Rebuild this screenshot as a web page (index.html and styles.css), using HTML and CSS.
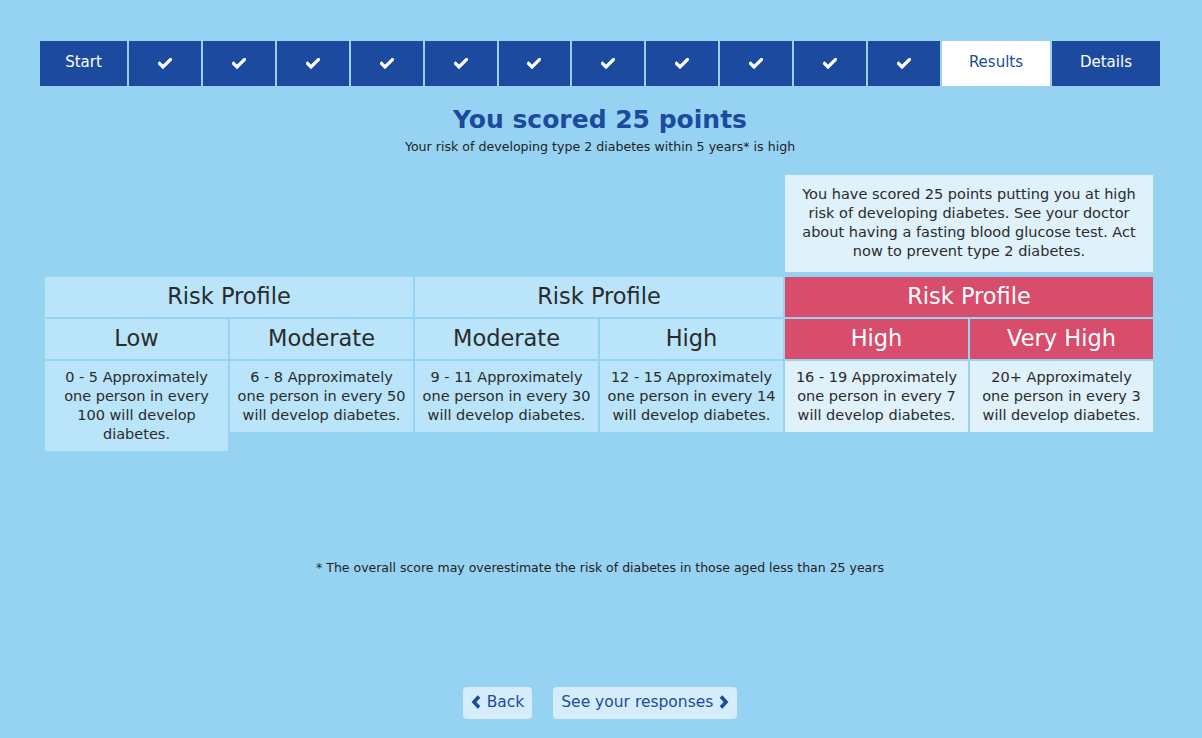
FILE: index.html
```html
<!DOCTYPE html>
<html lang="en">
<head>
<meta charset="utf-8">
<title>Results</title>
<link rel="stylesheet" href="styles.css">
</head>
<body>
<div class="page">
  <nav class="steps">
    <div class="step step-start">Start</div>
    <div class="step step-check"><svg class="tick" viewBox="0 0 14 11" width="14" height="11"><path d="M1.5 5.5 L5 9 L12.5 1.5" /></svg></div>
    <div class="step step-check"><svg class="tick" viewBox="0 0 14 11" width="14" height="11"><path d="M1.5 5.5 L5 9 L12.5 1.5" /></svg></div>
    <div class="step step-check"><svg class="tick" viewBox="0 0 14 11" width="14" height="11"><path d="M1.5 5.5 L5 9 L12.5 1.5" /></svg></div>
    <div class="step step-check"><svg class="tick" viewBox="0 0 14 11" width="14" height="11"><path d="M1.5 5.5 L5 9 L12.5 1.5" /></svg></div>
    <div class="step step-check"><svg class="tick" viewBox="0 0 14 11" width="14" height="11"><path d="M1.5 5.5 L5 9 L12.5 1.5" /></svg></div>
    <div class="step step-check"><svg class="tick" viewBox="0 0 14 11" width="14" height="11"><path d="M1.5 5.5 L5 9 L12.5 1.5" /></svg></div>
    <div class="step step-check"><svg class="tick" viewBox="0 0 14 11" width="14" height="11"><path d="M1.5 5.5 L5 9 L12.5 1.5" /></svg></div>
    <div class="step step-check"><svg class="tick" viewBox="0 0 14 11" width="14" height="11"><path d="M1.5 5.5 L5 9 L12.5 1.5" /></svg></div>
    <div class="step step-check"><svg class="tick" viewBox="0 0 14 11" width="14" height="11"><path d="M1.5 5.5 L5 9 L12.5 1.5" /></svg></div>
    <div class="step step-check"><svg class="tick" viewBox="0 0 14 11" width="14" height="11"><path d="M1.5 5.5 L5 9 L12.5 1.5" /></svg></div>
    <div class="step step-check"><svg class="tick" viewBox="0 0 14 11" width="14" height="11"><path d="M1.5 5.5 L5 9 L12.5 1.5" /></svg></div>
    <div class="step step-results">Results</div>
    <div class="step step-details">Details</div>
  </nav>

  <h1 class="score">You scored 25 points</h1>
  <p class="subtitle">Your risk of developing type 2 diabetes within 5 years* is high</p>

  <div class="info">You have scored 25 points putting you at high risk of developing diabetes. See your doctor about having a fasting blood glucose test. Act now to prevent type 2 diabetes.</div>

  <div class="profiles">
    <div class="group">
      <div class="group-head">Risk Profile</div>
      <div class="row">
        <div class="level">Low</div>
        <div class="level">Moderate</div>
      </div>
      <div class="row row-top">
        <div class="desc">0 - 5 Approximately one person in every 100 will develop diabetes.</div>
        <div class="desc">6 - 8 Approximately one person in every 50 will develop diabetes.</div>
      </div>
    </div>
    <div class="group">
      <div class="group-head">Risk Profile</div>
      <div class="row">
        <div class="level">Moderate</div>
        <div class="level">High</div>
      </div>
      <div class="row row-top">
        <div class="desc">9 - 11 Approximately one person in every 30 will develop diabetes.</div>
        <div class="desc">12 - 15 Approximately one person in every 14 will develop diabetes.</div>
      </div>
    </div>
    <div class="group group-active">
      <div class="group-head">Risk Profile</div>
      <div class="row">
        <div class="level">High</div>
        <div class="level">Very High</div>
      </div>
      <div class="row row-top">
        <div class="desc">16 - 19 Approximately one person in every 7 will develop diabetes.</div>
        <div class="desc">20+ Approximately one person in every 3 will develop diabetes.</div>
      </div>
    </div>
  </div>

  <p class="footnote">* The overall score may overestimate the risk of diabetes in those aged less than 25 years</p>

  <div class="actions">
    <a class="btn" href="#"><svg class="chev" viewBox="0 0 10 14" width="10" height="14"><path d="M8 1.5 L3 7 L8 12.5" /></svg>Back</a>
    <a class="btn" href="#">See your responses<svg class="chev chev-right" viewBox="0 0 10 14" width="10" height="14"><path d="M2 1.5 L7 7 L2 12.5" /></svg></a>
  </div>
</div>
</body>
</html>
```

FILE: styles.css
```css
html, body {
  margin: 0;
  padding: 0;
}

body {
  background: #96d3f3;
  font-family: "DejaVu Sans", "Liberation Sans", sans-serif;
  color: #2b2b2b;
}

.page {
  width: 1120px;
  margin-left: 40px;
  padding-top: 41px;
}

.steps {
  display: flex;
  gap: 2px;
  height: 45px;
}

.step {
  box-sizing: border-box;
  padding-bottom: 3px;
  background: #1c4a9f;
  color: #ffffff;
  display: flex;
  align-items: center;
  justify-content: center;
  font-size: 15px;
}

.step-check {
  flex: 1;
  padding-bottom: 1px;
}

.step-start {
  width: 87px;
}

.step-results {
  width: 108px;
  background: #ffffff;
  color: #1c4a9f;
}

.step-details {
  width: 108px;
}

.tick path {
  fill: none;
  stroke: #ffffff;
  stroke-width: 3.2;
  stroke-linecap: square;
  stroke-linejoin: miter;
}

.score {
  margin: 17px 0 0;
  text-align: center;
  font-size: 25px;
  line-height: 34px;
  font-weight: bold;
  color: #1c4a9f;
}

.subtitle {
  margin: 2px 0 0;
  text-align: center;
  font-size: 12.6px;
  line-height: 16px;
  color: #222222;
}

.info {
  margin: 20px 0 0 745px;
  width: 368px;
  box-sizing: border-box;
  padding: 10px 12px 11px;
  background: #dff1fb;
  font-size: 14.5px;
  line-height: 19px;
  text-align: center;
}

.profiles {
  margin: 5px 0 0 5px;
  width: 1108px;
  display: flex;
  gap: 2px;
  align-items: flex-start;
}

.group {
  width: 368px;
  display: flex;
  flex-direction: column;
  gap: 2px;
}

.group-head,
.level {
  height: 40px;
  line-height: 38px;
  text-align: center;
  font-size: 22.5px;
  background: #b9e4f9;
  color: #2b2b2b;
}

.row {
  display: flex;
  gap: 2px;
}

.row-top {
  align-items: flex-start;
}

.level {
  flex: 1;
}

.desc {
  flex: 1;
  min-width: 0;
  padding: 7px 6.5px;
  background: #b9e4f9;
  font-size: 14.5px;
  line-height: 19px;
  text-align: center;
}

.group-active .group-head,
.group-active .level {
  background: #d74d6b;
  color: #ffffff;
}

.group-active .desc {
  background: #dff1fb;
}

.footnote {
  margin: 109px 0 0;
  text-align: center;
  font-size: 12.5px;
  line-height: 16px;
  color: #222222;
}

.actions {
  margin-top: 111px;
  display: flex;
  justify-content: center;
  gap: 21px;
}

.btn {
  display: inline-flex;
  align-items: center;
  gap: 6px;
  height: 32px;
  padding: 0 8px 2px;
  box-sizing: border-box;
  border-radius: 4px;
  background: #d5edfb;
  color: #1c4a9f;
  font-size: 15.5px;
  text-decoration: none;
}

.chev path {
  fill: none;
  stroke: #1c4a9f;
  stroke-width: 3.6;
  stroke-linecap: butt;
  stroke-linejoin: miter;
}
```
